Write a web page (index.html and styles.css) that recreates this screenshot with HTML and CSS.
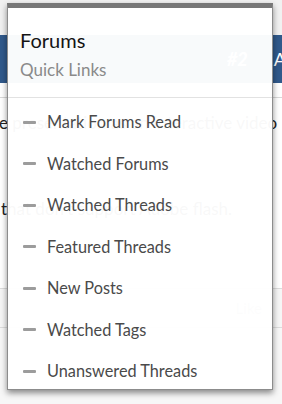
FILE: index.html
```
<!DOCTYPE html>
<html>
<head>
<meta charset="utf-8">
<link rel="stylesheet" href="styles.css">
</head>
<body>
<div class="page">
  <div class="top"></div>
  <div class="bar"><span class="num">#2</span><span class="bar-a">A</span></div>
  <div class="sub"></div>
  <p class="line l1">e presentation as an interactive video</p>
  <p class="line l2">that don't support Adobe flash.</p>
  <div class="actions"><span class="like">Like</span></div>
</div>
<div class="menu">
  <div class="menu-head">
    <div class="menu-title">Forums</div>
    <div class="menu-sub">Quick Links</div>
  </div>
  <ul class="menu-list">
    <li class="menu-item"><span class="dash"></span>Mark Forums Read</li>
    <li class="menu-item"><span class="dash"></span>Watched Forums</li>
    <li class="menu-item"><span class="dash"></span>Watched Threads</li>
    <li class="menu-item"><span class="dash"></span>Featured Threads</li>
    <li class="menu-item"><span class="dash"></span>New Posts</li>
    <li class="menu-item"><span class="dash"></span>Watched Tags</li>
    <li class="menu-item"><span class="dash"></span>Unanswered Threads</li>
  </ul>
</div>
</body>
</html>
```
FILE: styles.css
```
html, body {
  margin: 0;
  padding: 0;
  width: 282px;
  height: 404px;
  overflow: hidden;
  background: #fff;
  font-family: Lato, "Open Sans", sans-serif;
}
.page {
  position: relative;
  width: 282px;
  height: 404px;
  background: #f7f7f7;
}
.top {
  height: 35px;
  background: #f1f1f1;
}
.bar {
  height: 48px;
  background: #30598b;
  display: flex;
  align-items: center;
  justify-content: flex-end;
  color: #fff;
  font-size: 18px;
  font-style: italic;
}
.num {
  margin-right: 26px;
  font-weight: bold;
}
.bar-a {
  margin-right: -4px;
  font-style: normal;
}
.sub {
  height: 14px;
  background: #fff;
  border-bottom: 1px solid #d8d8d8;
}
.line {
  margin: 0;
  font-size: 17px;
  color: #222;
  white-space: nowrap;
  background: #fff;
}
.l1 {
  padding-top: 14px;
  text-indent: -1px;
  height: 86px;
}
.l2 {
  text-indent: 1px;
  height: 90px;
}
.actions {
  height: 38px;
  border-top: 1px solid #dcdcdc;
  border-bottom: 1px solid #dcdcdc;
  display: flex;
  align-items: center;
  justify-content: flex-end;
  padding-right: 20px;
  background: #f6f6f6;
}
.like {
  font-size: 15px;
  color: #aaa;
}
.menu {
  position: absolute;
  left: 7px;
  top: 3px;
  width: 266px;
  height: 387px;
  box-sizing: border-box;
  background: rgba(255, 255, 255, 0.968);
  border-top: 5px solid #777;
  border-left: 1px solid #8c8c8c;
  border-right: 1px solid #8c8c8c;
  border-bottom: 1px solid #8c8c8c;
  box-shadow: 0 3px 6px rgba(0, 0, 0, 0.45);
}
.menu-head {
  padding: 20px 12px 17px 12px;
  border-bottom: 1px solid #e2e2e2;
}
.menu-title {
  font-size: 20px;
  line-height: 24px;
  color: #141414;
}
.menu-sub {
  margin-top: 8px;
  font-size: 17px;
  line-height: 20px;
  color: #8a8a8a;
}
.menu-list {
  list-style: none;
  margin: 0;
  padding: 0;
}
.menu-item {
  display: flex;
  align-items: center;
  padding: 14px 0 7.5px 15px;
  font-size: 16.3px;
  line-height: 20px;
  color: #4a4a4a;
}
.dash {
  width: 13px;
  height: 3px;
  border-radius: 1px;
  background: #9c9c9c;
  margin-right: 11px;
}
```
